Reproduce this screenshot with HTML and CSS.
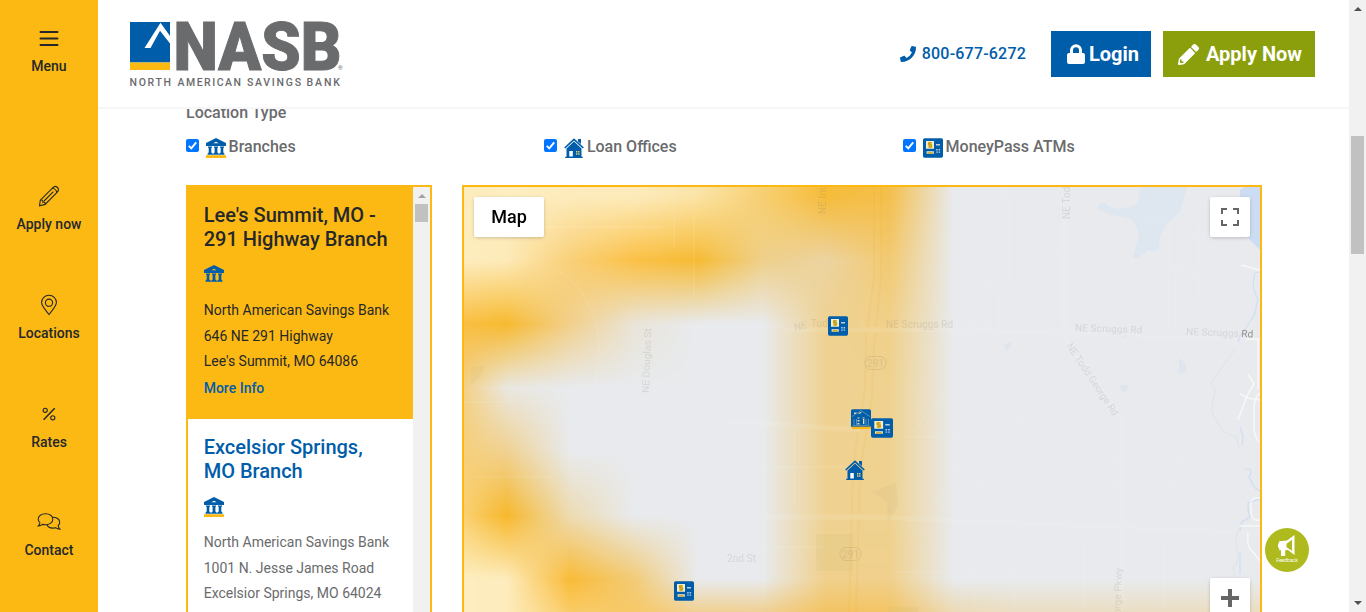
FILE: index.html
```html
<!DOCTYPE html>
<html lang="en">
<head>
<meta charset="utf-8">
<title>NASB Locations</title>
<link rel="stylesheet" href="styles.css">
</head>
<body>
<svg class="sprite" aria-hidden="true">
  <symbol id="bank" viewBox="0 0 20 20">
    <path fill="#005daa" fill-rule="evenodd" d="M10 0 20 5v3H0V5zM7.3 5.2h5.4L10 3.7z"/>
    <path fill="#005daa" d="M2 8.6h4v1.2h-.7v5H6V16H2v-1.2h.7v-5H2zM8 8.6h4v1.2h-.6v5h.6V16H8v-1.2h.6v-5H8zM14 8.6h4v1.2h-.7v5h.7V16h-4v-1.2h.7v-5H14zM1.5 15.6h17v1.1h-17z"/>
    <path fill="#fdb913" d="M0 17.2h20V20H0z"/>
  </symbol>
  <symbol id="house" viewBox="0 0 20 20">
    <path fill="none" stroke="#005daa" stroke-width="1.7" d="M.7 10 10 1.3l9.3 8.7"/>
    <path fill="#005daa" d="M14 1h3v5l-3-2.6zM10 3.6l7.5 7V18.7h1.3V20H1.2v-1.3h1.3v-8.1z"/>
    <path fill="#fff" d="M5.3 13h3.5v5.5H5.3z"/>
    <path fill="#e8cf70" d="M12 13h1.4v1.5H12zM14.1 13h1.4v1.5h-1.4zM12 15.3h1.4v1.5H12zM14.1 15.3h1.4v1.5h-1.4z"/>
  </symbol>
  <symbol id="atm" viewBox="0 0 20 20">
    <rect y=".3" width="20" height="19.4" rx="1.6" fill="#005daa"/>
    <path fill="#f6eecb" d="M3 3h8v7.8H3zM3.6 13.2h7.2v2.6H3.6z"/>
    <path fill="none" stroke="#c79d13" stroke-width="1.3" d="M8.9 4.900H5.600v1.900h2.900v2H5.200M7 4v6M4.500 14.800h5.400"/>
    <path fill="#b9cfe0" d="M13 6h4v1.500h-4zM13.200 11h1.500v1.400h-1.500zM15.600 11h1.500v1.400h-1.500zM13.200 13.400h1.500v1.400h-1.500zM15.600 13.400h1.500v1.400h-1.500z"/>
  </symbol>
  <symbol id="cluster" viewBox="0 0 20 20">
    <rect y=".3" width="20" height="18" rx="1.600" fill="#005daa"/>
    <path fill="#e3dcb8" d="M3 3.500h3L4.500 5H3zM7 4.600 9.500 3h1.500L8.500 5zM6.500 8.500h2v1h-2zM11.500 8.500h2v1h-2zM6.500 11h2v1.500h-2zM6.500 14h2v1.500h-2zM12 10h1.300v5H12z"/>
    <path fill="none" stroke="#6d9bb5" stroke-width=".8" d="M1 7.500 5 5l5-3.500L15 5l4 2.500M3 10v6M5.500 10v6M15 10v6M17.500 10v6M1.500 16.600h17"/>
    <path fill="#fdb913" d="M1 17.700h19V20H1z"/>
  </symbol>
</svg>

<div class="app">
  <nav class="side">
    <a class="side-item side-menu"><svg class="side-icon" viewBox="0 0 24 24"><path stroke-width="2" d="M3.5 6h17M3.5 12.500h17M3.5 19h17" stroke-linecap="round"/></svg><span>Menu</span></a>
    <a class="side-item"><svg class="side-icon" viewBox="0 0 24 24"><path d="m15.2 4.300 2-1.600q1.600-.8 3.200.8t1 3.200l-1.600 2L8.100 20.400 2.500 21.800l.8-5.600zM15.200 4.300q3.800.3 4.600 4.400M3.300 16.200q1.600-.4 2.200.1t.3 1.800q1.300-.2 1.900.4t.4 1.900M16.400 7.600 7 17"/></svg><span>Apply now</span></a>
    <a class="side-item"><svg class="side-icon" viewBox="0 0 24 24"><path d="M12 21.500C8.500 16.800 4.600 13.300 4.600 9.600a7.400 7.400 0 0 1 14.800 0c0 3.700-3.900 7.200-7.400 11.900z"/><circle cx="12" cy="9.700" r="3.600"/></svg><span>Locations</span></a>
    <a class="side-item"><svg class="side-icon" viewBox="0 0 24 24"><circle cx="8.200" cy="8.300" r="2.100"/><circle cx="15.800" cy="15.800" r="2.100"/><path stroke-width="1.500" d="M17.700 6.200 6.600 17.800"/></svg><span>Rates</span></a>
    <a class="side-item"><svg class="side-icon" viewBox="0 0 24 24"><path d="M8.500 3.700c4.200 0 7.300 2.400 7.300 5.500s-3.100 5.600-7.300 5.600q-1.700 0-3-.4-1.900 1.500-4.200 1.500 1.500-1.600 1.600-3.200Q1.200 11.200 1.200 9.200c0-3.100 3.100-5.500 7.300-5.500z"/><path d="M15.500 7.200c4 0 7.200 2 7.200 5q0 1.900-1.500 3.300.1 2.200 1.700 3.700-2.500 0-4.300-1.500-1.300.4-3 .4-4.200 0-5.800-3.300"/></svg><span>Contact</span></a>
  </nav>

  <div class="main">
    <header class="header">
      <svg class="logo" width="216" height="68" viewBox="0 0 216 68">
        <path fill="#005daa" d="M0 1h40v40.500H0z"/>
        <path fill="#fff" d="M30.500 1.700 40 15v7.500L30 9.700 20.500 27h-6z"/>
        <path fill="#fdb913" d="M0 41.500h40V49H0z"/>
        <text class="logo-name" x="43.500" y="48.500" textLength="168" lengthAdjust="spacingAndGlyphs">NASB</text>
        <text class="logo-reg" x="208" y="49">®</text>
        <g class="logo-sub">
          <text x="-.5" y="65" textLength="41.500">NORTH</text>
          <text x="47.500" y="65" textLength="63.500">AMERICAN</text>
          <text x="117" y="65" textLength="54">SAVINGS</text>
          <text x="176.500" y="65" textLength="33.500">BANK</text>
        </g>
      </svg>
      <div class="actions">
        <a class="phone"><svg width="16" height="16" viewBox="0 0 512 512"><path fill="currentColor" d="m493 25-104-24c-11-3-23 3-27 14l-48 112c-4 10-1 21 7 28l61 50a370 370 0 0 1-177 177l-50-61c-7-8-18-11-28-7L15 362C4 366-2 378 1 389l24 104c3 11 12 19 23 19 256 0 464-207 464-464 0-11-8-21-19-23z"/></svg>800-677-6272</a>
        <a class="button login"><svg width="18" height="20" viewBox="0 0 18 20"><path fill="currentColor" fill-rule="evenodd" d="M2 9h1V6.300a6 6 0 0 1 12 0V9h1q2 0 2 2v7q0 2-2 2H2q-2 0-2-2v-7q0-2 2-2zm4 0h6V6.300a3 3 0 0 0-6 0z"/></svg>Login</a>
        <a class="button apply"><svg width="21" height="21" viewBox="0 0 512 512"><path fill="currentColor" fill-rule="evenodd" d="m498 142-46 46c-5 5-12 5-17 0L324 77c-5-5-5-12 0-17l46-46c19-19 49-19 68 0l60 60c19 19 19 49 0 68zM284 100 22 362 0 484c-3 17 11 31 28 28l122-21 262-262c5-5 5-12 0-17L301 100c-5-5-12-5-17 0zM88 424h48v36l-64 11-31-31 11-64h36z"/></svg>Apply Now</a>
      </div>
    </header>

    <main class="content">
      <h4 class="group-title">Location Type</h4>
      <div class="filters">
        <label class="filter"><svg class="check" viewBox="0 0 13 13"><rect width="13" height="13" rx="2"/><path d="m2.800 6.800 2.500 2.600 4.900-6"/></svg><svg class="type-icon"><use href="#bank"/></svg>Branches</label>
        <label class="filter"><svg class="check" viewBox="0 0 13 13"><rect width="13" height="13" rx="2"/><path d="m2.800 6.800 2.500 2.600 4.900-6"/></svg><svg class="type-icon"><use href="#house"/></svg>Loan Offices</label>
        <label class="filter"><svg class="check" viewBox="0 0 13 13"><rect width="13" height="13" rx="2"/><path d="m2.800 6.800 2.500 2.600 4.900-6"/></svg><svg class="type-icon"><use href="#atm"/></svg>MoneyPass ATMs</label>
      </div>

      <div class="finder">
        <section class="list">
          <div class="cards">
            <article class="card active">
              <h3>Lee's Summit, MO - 291 Highway Branch</h3>
              <svg class="card-icon"><use href="#bank"/></svg>
              <p>North American Savings Bank<br>646 NE 291 Highway<br>Lee's Summit, MO 64086</p>
              <a class="more">More Info</a>
            </article>
            <article class="card">
              <h3>Excelsior Springs, MO Branch</h3>
              <svg class="card-icon"><use href="#bank"/></svg>
              <p>North American Savings Bank<br>1001 N. Jesse James Road<br>Excelsior Springs, MO 64024</p>
            </article>
          </div>
          <div class="list-scroll"><i class="arrow up light"></i><i class="list-thumb"></i></div>
        </section>

        <section class="map">
          <canvas class="heat" id="heat" width="796" height="427"></canvas>
          <svg class="streets" width="796" height="427" viewBox="0 0 796 427">
            <path fill="#dbe4ef" opacity=".75" d="M634 21q0-6 7-5 5 7 20 5 6 0 13-5l3-16h46l-7 24-17 17q-4 10-5 21l-5 3q-5-4-8 1l-9 6-3-2 4-14q3-9 0-16-4-10-20-11-15-3-19-8z"/>
            <path fill="#ccdcf2" d="M776 3q5-4 10-3h10v63l-20-20z"/>
            <g fill="#cfdff3" opacity=".4"><path d="m540 158 6-3 2 4-5 4zM715 171l6 5 2 8-8 3zM656 198l8 0-2 8-5-2zM656 150l7-3v4z"/></g>
            <path fill="#b4a982" opacity=".12" d="m408 305 24-9 2 22-10 17-1-20z"/>
            <path fill="#c9bf74" opacity=".15" d="M352 347h37v37h-37zM7 179h14l-5 12-9 7zM424 420h30v7h-30z"/>
            <g fill="none" stroke="#fff" stroke-width="1.500" opacity=".09">
              <path d="M410 0v90l-8 60-1 50-12 80-4 147M417 0v90l-7 70-2 50-12 75-4 142" stroke="#f5a000" stroke-width="2"/>
              <path stroke-width="5" d="M600 0v137l3 18 55 75v120l-2 77M320 143l184 0 290 10M264 234l132 9M300 330h110l386 16"/>
              <path d="M490 8h55v90h-38v50h-20M560 20v45h40M600 83h105l80 7M538 0v30M570 68v40h-35v40M705 30v110M740 50h-20l-8 40v65M685 35h50v80M521 85h-28v55h32v-48M490 220v65h55M440 250h80v50h-40v40M500 230h90M600 270h120v60M620 300h90M430 385h160M470 360v60M510 340v80M550 340v80M620 350v70M660 350v70M700 350v70M300 240v170M270 280h120M280 360h80M330 240v80M0 215h90M115 190l25 40M170 150v65M190 140h130M10 290h80M20 40h180M210 0v60M120 0l-70 60M0 30 60 0M90 80q60 40 40 120M230 20v90"/>
              <path d="M450 245q40-60 80-50t20 70q-20 50-80 50M560 300q25-60 80-70M730 180q30 45 10 90l-45 35"/>
            </g>
            <g fill="none" stroke="#c9dbf5" stroke-width="1.200"><path d="m796 85-5 1-2 10q1 10 5 16l-4 17-14 20-2 6M776 240l3 10-1 8M780 282h6q2 4-1 8l5 10 7 5-1 7-12 4q0 10 2 14l-8 5-2 9M776 365v22" opacity=".8"/></g>
            <g fill="none" stroke="#dfe1e3"><path d="m771 162-24 34q6 5 3 14-4 10-1 18l10 16 14 7 2 9M776 340q-6 10-3 22t-4 18q4 10-2 22"/></g>
            <g fill="none" stroke="#f6f7f8" stroke-width="1.500"><path d="m777 78 19 5M776 207l8 4 12 2M776 339h20M782 152h14M794 152v50M784 187l6 10q-7 10-10 20l-6 16M796 206q-6 4-6 15v20q1 10 5 14M796 311q-10-2-9 8v6q1 10 9 8M784 346q-2 15 6 20l6 8"/></g>
            <g class="streets-labels">
              <text transform="translate(362 27) rotate(-90)">NE Inc</text>
              <text transform="translate(606 32) rotate(-90)">NE Tod</text>
              <text transform="translate(185 206) rotate(-88)">NE Douglas St</text>
              <text transform="translate(331 144) rotate(-14)">NE</text>
              <text x="347" y="140">Tudor</text>
              <text x="422" y="141">NE Scruggs Rd</text>
              <text x="611" y="144" transform="rotate(2 611 144)">NE Scruggs Rd</text>
              <text x="722" y="148" transform="rotate(2 722 148)">NE Scruggs <tspan class="strong">Rd</tspan></text>
              <text transform="translate(602 159) rotate(56)" textLength="85">NE Todd George Rd</text>
              <text x="263" y="375">2nd St</text>
              <text transform="translate(656 440) rotate(-88)">George Pkwy</text>
              <text x="403" y="180">291</text><text x="378" y="371">291</text>
            </g>
            <g fill="none" stroke="#8a7c55" opacity=".18"><rect x="401" y="169.500" width="21" height="13" rx="6"/><rect x="376" y="360.500" width="21" height="13" rx="6"/></g>
          </svg>
          <svg class="pin pin-tudor"><use href="#atm"/></svg>
          <svg class="pin pin-center"><use href="#cluster"/></svg>
          <svg class="pin pin-east" viewBox="0 0 20 20" preserveAspectRatio="none"><use href="#atm" width="20" height="20"/></svg>
          <svg class="pin pin-house"><use href="#house"/></svg>
          <svg class="pin pin-south"><use href="#atm"/></svg>
          <button class="control map-type">Map</button>
          <button class="control fullscreen"><svg width="18" height="18" viewBox="0 0 18 18"><path fill="#666" d="M0 0h6v2H2v4H0zM12 0h6v6h-2V2h-4zM0 12h2v4h4v2H0zM16 12h2v6h-6v-2h4z"/></svg></button>
          <button class="control zoom-in"><svg width="18" height="18" viewBox="0 0 18 18"><path fill="#666" d="M7 0h4v7h7v4h-7v7H7v-7H0V7h7z"/></svg></button>
        </section>
      </div>
    </main>
  </div>

  <div class="page-scroll"><i class="arrow up"></i><i class="page-thumb"></i><i class="arrow down"></i></div>

  <a class="feedback"><svg width="18" height="22" viewBox="0 0 18 22"><path fill="#fff" fill-rule="evenodd" d="M16.500 0v20L10 15l-2.800.2V21H3v-5.800H1.200V13L0 12.500V8.500l1.200-.5V6H4l5-.5zM14 4.800 8.500 8.800v3.500L14 15.700z"/></svg><span>Feedback</span></a>
</div>
<script src="heat.js"></script>
</body>
</html>
```
FILE: styles.css
```css
* { box-sizing: border-box; }
body { margin: 0; font-family: Roboto, "Liberation Sans", sans-serif; color: #6a6b6d; background: #fff; overflow: hidden; }
h3, h4, p { margin: 0; }
.sprite { position: absolute; width: 0; height: 0; }
.app { display: flex; height: 612px; overflow: hidden; }

/* Side navigation */
.side { width: 98px; flex: none; background: #fdb913; padding-top: 26px; display: flex; flex-direction: column; gap: 58.800px; }
.side-item { display: flex; flex-direction: column; align-items: center; gap: 6px; height: 50px; flex: none; font-size: 14px; font-weight: 500; line-height: 20px; color: #25282a; }
.side-menu { margin-bottom: 49.200px; }
.side-icon { width: 24px; height: 24px; flex: none; fill: none; stroke: #25282a; stroke-width: 1.100; }

/* Header */
.main { flex: 1; min-width: 0; display: flex; flex-direction: column; }
.header { flex: none; height: 109px; border-bottom: 2px solid #f6f6f6; padding: 0 34px 0 32px; display: flex; justify-content: space-between; background: #fff; z-index: 1; }
.logo { margin-top: 21px; overflow: visible; }
.logo-name { font-size: 66px; font-weight: 900; fill: #6a6b6d; stroke: #6a6b6d; stroke-width: 1; }
.logo-reg { font-size: 6px; fill: #6a6b6d; }
.logo-sub { font-size: 10.500px; font-weight: 500; fill: #6a6b6d; }
.actions { display: flex; height: 46px; margin-top: 31px; align-items: center; }
.phone { display: flex; align-items: center; gap: 6px; color: #005daa; font-size: 16px; font-weight: 500; line-height: 20px; letter-spacing: .2px; margin: 0 25px 1px 0; }
.button { display: flex; align-items: center; height: 46px; color: #fff; font-size: 20px; font-weight: 700; }
.login { width: 100px; padding-left: 16px; background: #005daa; gap: 4px; margin-right: 12px; }
.apply { width: 152px; padding-left: 15px; background: #8a9f0b; gap: 7px; }

/* Filters */
.content { flex: none; padding: 0 87px 0 88px; margin-top: -8px; }
.group-title { font-size: 16px; font-weight: 500; line-height: 24px; }
.filters { display: grid; grid-template-columns: 358.300px 358.700px 1fr; margin-top: 9px; height: 61px; }
.filter { display: flex; align-items: center; height: 24px; font-size: 16px; font-weight: 500; }
.check { width: 13px; height: 13px; flex: none; margin: 0 7px 1px 0; }
.check rect { fill: #0075ff; }
.check path { fill: none; stroke: #fff; stroke-width: 1.900; }
.type-icon { width: 20px; height: 20px; flex: none; margin: 3px 2.600px 0 0; }

/* Location list */
.finder { display: flex; gap: 30px; height: 500px; margin-top: -10px; }
.list { width: 246px; flex: none; border: 2px solid #fdb913; display: flex; }
.cards { flex: 1; overflow: hidden; }
.card { height: 232px; padding: 16px 16px 0 15.700px; font-size: 14px; }
.card h3 { font-size: 20px; line-height: 24px; font-weight: 500; color: #005daa; }
.card-icon { display: block; width: 20px; height: 20px; margin: 14px 0 13px; }
.card p { line-height: 25.700px; white-space: nowrap; }
.card.active { background: #fdb913; color: #25282a; }
.card.active h3 { color: #25282a; }
.more { display: block; line-height: 26px; font-weight: 500; color: #005daa; }
.list-scroll { width: 17px; background: #f1f1f1; display: flex; flex-direction: column; align-items: center; padding-top: 7px; }
.list-thumb { width: 13px; height: 18px; margin-top: 6px; background: #c1c1c1; }
.arrow { width: 0; height: 0; border: 4px solid transparent; }
.arrow.up { border-top: 0; border-bottom-color: #505050; }
.arrow.down { border-bottom: 0; border-top-color: #505050; margin-top: auto; }
.arrow.up.light { border-bottom-color: #a3a3a3; }

/* Map */
.map { position: relative; flex: 1; border: 2px solid #fdb913; overflow: hidden; background: #e8eaed; }
.heat, .streets { position: absolute; top: 0; left: 0; }
.streets-labels { font-size: 10px; fill: #70706b; fill-opacity: .17; letter-spacing: .1px; }
.streets-labels .strong { fill-opacity: .75; }
.pin { position: absolute; width: 20px; height: 20px; }
.pin-tudor { left: 364px; top: 129px; }
.pin-center { left: 387px; top: 222px; }
.pin-east { left: 407px; top: 231px; width: 22px; }
.pin-house { left: 381px; top: 273px; }
.pin-south { left: 210px; top: 394px; }
.control { position: absolute; display: flex; align-items: center; justify-content: center; padding: 0; width: 40px; height: 40px; border: 0; border-radius: 2px; background: #fff; box-shadow: 0 1px 4px -1px rgba(0, 0, 0, .3); font: 500 18px Roboto, sans-serif; color: #000; }
.map-type { left: 10px; top: 10px; width: 70px; padding-bottom: 2px; }
.fullscreen { right: 10px; top: 10px; }
.zoom-in { right: 10px; top: 391px; }

/* Page scrollbar and feedback badge */
.page-scroll { width: 17px; flex: none; background: #f1f1f1; display: flex; flex-direction: column; align-items: center; padding: 7px 0; }
.page-thumb { width: 13px; height: 118px; margin-top: 125px; background: #c1c1c1; }
.feedback { position: absolute; left: 1265px; top: 528px; width: 44px; height: 44px; border-radius: 50%; background: #afba1e; display: flex; flex-direction: column; align-items: center; padding-top: 7px; color: #fff; font-size: 5px; line-height: 6px; }
```
FILE: heat.js
```js
// Branch density surface: one colour per grid node, blended bilinearly.
const STEP = 63.85;
const ORIGIN = { x: -21.85, y: -55 };
const NONE = 'e8eaed';
const rows = [
  ['fdeec0', 'fdeec0', 'fdeec0', 'fdeec0', 'fdeec0', 'fbdc90', 'f9b92e', 'f8bb38', NONE],
  ['fdebb8', 'fdedc0', 'fdebbb', 'fdebbb', 'fbe3a5', 'f7cf72', 'f6bc3a', 'f4bf4d', NONE],
  ['fdeec0', 'fdeab8', 'f9d078', 'fbc147', 'f6bb34', 'efd08a', 'ecd3a0', 'f2ca72', NONE],
  ['fac04a', 'f7ba30', 'f2d08c', 'e9e4d8', NONE, NONE, 'efd292', 'f0d08a', NONE],
  ['f8c55a', 'e9e7e0', NONE, NONE, NONE, NONE, 'efd292', 'efd28f', NONE],
  ['f9cf70', 'f0d190', NONE, NONE, NONE, NONE, 'efd292', 'efd28f', NONE],
  ['fbdd93', 'f7b82c', 'eddbb2', NONE, NONE, NONE, 'efd292', 'efd28f', NONE],
  ['fdeec0', 'fdecbd', 'f9bb38', 'f2cb76', NONE, NONE, 'f0d08c', 'f0d08c', NONE],
  ['fdeec0', 'fdecbd', 'fbdc92', 'fbc75a', 'f8b93a', 'f7b840', 'f6b83e', 'f6b940', 'eecc80', 'edd39a', 'edd39a', 'edd39a', 'edd39a', 'edd39a']
];

function node(r, c) {
  const hex = (rows[Math.min(r, rows.length - 1)] || [])[c] || NONE;
  return [0, 2, 4].map(i => parseInt(hex.slice(i, i + 2), 16));
}

const canvas = document.getElementById('heat');
const ctx = canvas.getContext('2d');
const image = ctx.createImageData(canvas.width, canvas.height);
for (let y = 0; y < canvas.height; y++) {
  const gy = (y - ORIGIN.y) / STEP, r = Math.floor(gy), v = gy - r;
  for (let x = 0; x < canvas.width; x++) {
    const gx = (x - ORIGIN.x) / STEP, c = Math.floor(gx), u = gx - c;
    const a = node(r, c), b = node(r, c + 1), d = node(r + 1, c), e = node(r + 1, c + 1);
    const o = (y * canvas.width + x) * 4;
    for (let k = 0; k < 3; k++) {
      image.data[o + k] = (a[k] * (1 - u) + b[k] * u) * (1 - v) + (d[k] * (1 - u) + e[k] * u) * v;
    }
    image.data[o + 3] = 255;
  }
}
ctx.putImageData(image, 0, 0);
```
